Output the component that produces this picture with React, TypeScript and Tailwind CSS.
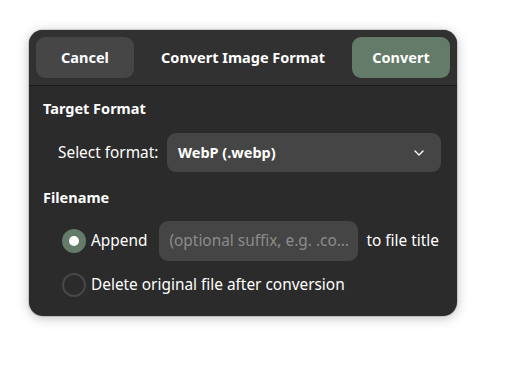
import { ChevronDown } from "lucide-react";

const font = { fontFamily: '"Noto Sans", "Open Sans", sans-serif' };

export default function App() {
  return (
    <div className="min-h-[375px] w-[515px] bg-white pt-[30px] pl-[29px]" style={font}>
      <div className="w-[428px] overflow-hidden rounded-[14px] bg-[#2b2b2b] text-white shadow-[0_2px_12px_rgba(0,0,0,0.25),0_0_0_1px_rgba(0,0,0,0.12)]">
        {/* header bar */}
        <div className="flex h-[56px] items-start justify-between border-b border-[#1c1c1c] bg-[#313131] px-[7px] pt-[7px]">
          <button className="h-[41px] w-[98px] rounded-[9px] bg-[#464646] text-[14.5px] font-bold">
            Cancel
          </button>
          <div className="flex h-[41px] items-center text-[14.5px] font-bold">Convert Image Format</div>
          <button className="h-[41px] w-[98px] rounded-[9px] bg-[#637b68] text-[14.5px] font-bold">
            Convert
          </button>
        </div>

        <div className="px-[14px] pt-[12px] pb-[19px] text-[15.4px]">
          <div className="h-[20px] text-[14.5px] leading-[20px] font-bold">Target Format</div>

          <div className="mt-[15px] flex items-center pl-[15px]">
            <span className="w-[109px]">Select format:</span>
            <div className="mr-[2px] flex h-[39px] flex-1 items-center justify-between rounded-[9px] bg-[#454545] pr-[14px] pl-[11px]">
              <span className="text-[14.5px] font-bold">WebP (.webp)</span>
              <ChevronDown size={16} strokeWidth={2} />
            </div>
          </div>

          <div className="mt-[15px] h-[20px] text-[14.5px] leading-[20px] font-bold">Filename</div>

          <div className="mt-[14px] flex items-center pl-[19px]">
            <span className="flex h-[24px] w-[24px] items-center justify-center rounded-full bg-[#637b68]">
              <span className="h-[10px] w-[10px] rounded-full bg-white" />
            </span>
            <span className="ml-[5px]">Append</span>
            <div className="ml-[12px] flex h-[40px] w-[199px] items-center rounded-[9px] bg-[#454545] px-[10px] whitespace-nowrap text-[#8c8c8c]">
              <span>(optional suffix, e.g. .co…</span>
            </div>
            <span className="ml-[8px] whitespace-nowrap">to file title</span>
          </div>

          <div className="mt-[12px] flex items-center pl-[19px]">
            <span className="h-[24px] w-[24px] rounded-full border-2 border-[#474747]" />
            <span className="ml-[5px]">Delete original file after conversion</span>
          </div>
        </div>
      </div>
    </div>
  );
}
